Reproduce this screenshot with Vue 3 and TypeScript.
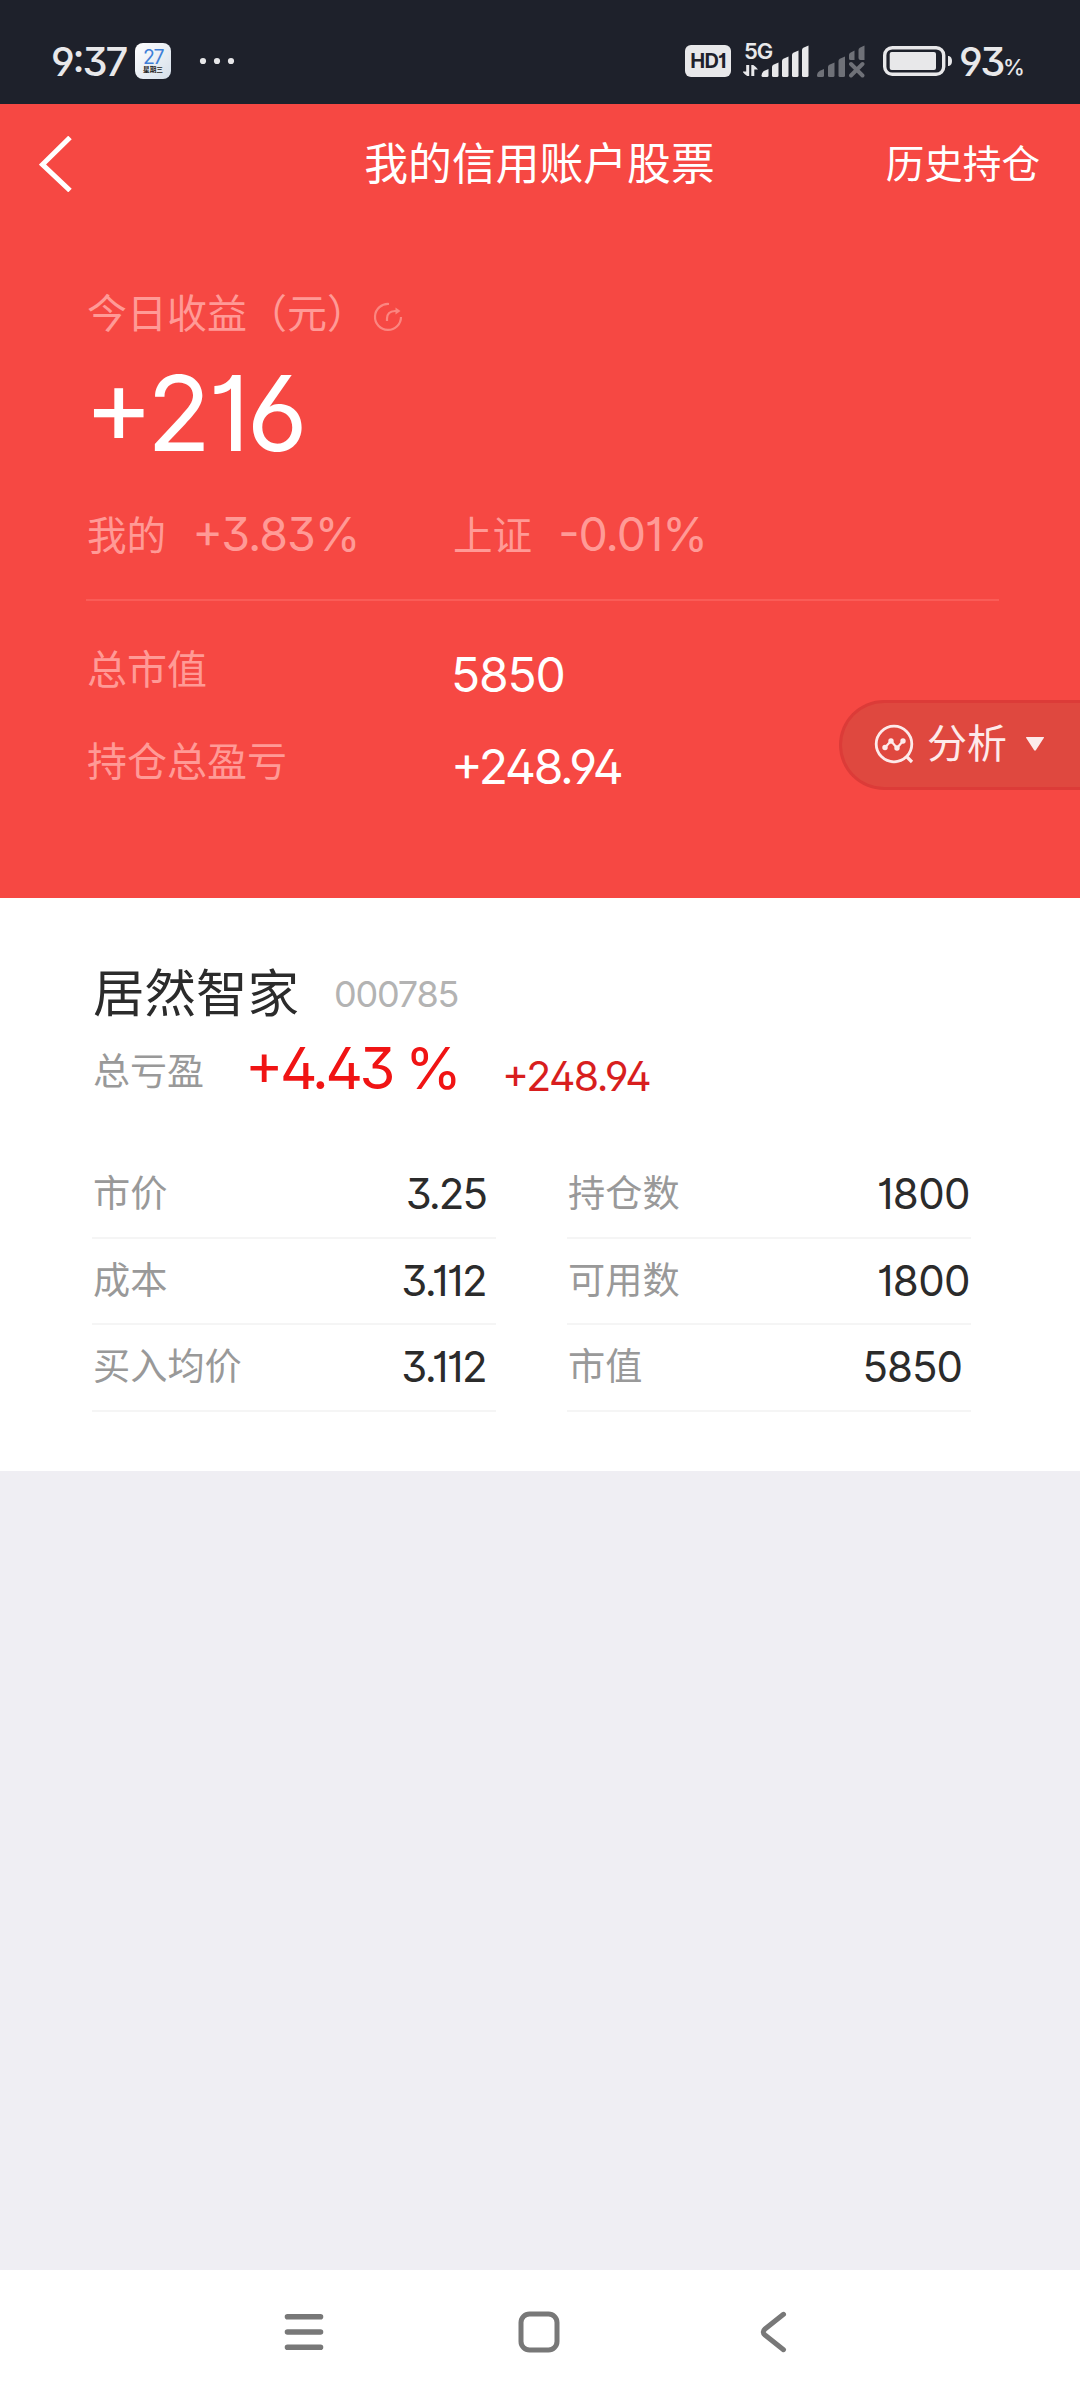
<script setup lang="ts">
interface Cell {
  label: string
  value: string
  cls: string
}

const left: Cell[] = [
  { label: '市价', value: '3.25', cls: 'v325' },
  { label: '成本', value: '3.112', cls: 'v3112' },
  { label: '买入均价', value: '3.112', cls: 'v3112' },
]
const right: Cell[] = [
  { label: '持仓数', value: '1800', cls: 'v1800' },
  { label: '可用数', value: '1800', cls: 'v1800' },
  { label: '市值', value: '5850', cls: 'v5850' },
]
const columns: Cell[][] = [left, right]
</script>

<template>
  <div class="screen">
    <div class="status">
      <span class="clock">9:37</span>
      <span class="calendar"><b>27</b><i>星期三</i></span>
      <svg class="dots" width="36" height="8" viewBox="0 0 36 8" fill="#e6e6e8">
        <circle cx="4" cy="4" r="3.1" /><circle cx="18" cy="4" r="3.1" /><circle cx="32" cy="4" r="3.1" />
      </svg>
      <span class="hd">HD1</span>
      <div class="signal">
        <span class="net">5G</span>
        <svg width="122" height="36" viewBox="743 43 122 36">
          <g fill="#e8e8ea">
            <path d="M742.500 71.500h3.700V65h3v11h-2q-3-2-4.700-4.500zM758 69.500h-3.700V76h-3V65h2q3 2 4.700 4.500z" />
            <path d="M761.500 75.500q0-3.500 3.500-5l3.500-1.500v6.500q0 1.500-1.500 1.500h-4q-1.500 0-1.500-1.500z" />
            <path d="M772 67q0-1.500 1.300-2.200l5.200-2.300V75.500q0 1.500-1.500 1.500h-3.500q-1.500 0-1.500-1.500z" />
            <path d="M782 61q0-1.500 1.300-2.200l5.200-2.300V75.500q0 1.500-1.500 1.500h-3.500q-1.500 0-1.500-1.500z" />
            <path d="M792 55q0-1.500 1.300-2.200l5.200-2.300V75.500q0 1.500-1.500 1.500h-3.500q-1.500 0-1.500-1.500z" />
            <path d="M802 50q0-1.500 1.300-2.200l5.200-2.300V75.500q0 1.500-1.500 1.500h-3.500q-1.500 0-1.500-1.500z" />
          </g>
          <g fill="#6f7178">
            <path d="M817 75.500q0-3.500 3.500-5l3.500-1.500v6.500q0 1.500-1.500 1.500h-4q-1.500 0-1.500-1.500z" />
            <path d="M828 67q0-1.500 1.300-2.200l5.200-2.300V75.500q0 1.500-1.500 1.500h-3.500q-1.500 0-1.500-1.500z" />
            <path d="M838.500 61q0-1.500 1.300-2.200l5.200-2.300V75.500q0 1.500-1.500 1.500h-3.500q-1.500 0-1.500-1.500z" />
            <path d="M849 55q0-1.500 1.300-2.200l4.200-2.300V60h-4q-1.500 0-1.500-1.500z" />
            <path d="M858.500 50q0-1.500 1.300-2.200l4.700-2.300V60h-4q-2 0-2-2z" />
          </g>
          <path d="M851 64l11.500 11.500M862.500 64l-11.500 11.500" stroke="#6f7178" stroke-width="3.900" stroke-linecap="round" />
        </svg>
      </div>
      <svg class="battery" width="70" height="30" viewBox="883 46 70 30">
        <rect x="884.700" y="47.700" width="59" height="26.600" rx="7.500" fill="none" stroke="#e8e8ea" stroke-width="3.400" />
        <rect x="889.700" y="52" width="46.300" height="18" rx="2" fill="#e8e8ea" />
        <path d="M948 56h1q3 1 3 5t-3 5h-1z" fill="#e8e8ea" />
      </svg>
      <span class="percent">93<small>%</small></span>
    </div>

    <div class="hero">
      <div class="nav">
        <svg class="back" width="34" height="56" viewBox="0 0 34 56" fill="none" stroke="#fff" stroke-width="5">
          <path d="M31 1.500L3.500 28.500 31 54.500" />
        </svg>
        <h1>我的信用账户股票</h1>
        <span class="history">历史持仓</span>
      </div>

      <div class="today">
        <span>今日收益（元）</span>
        <svg width="30" height="30" viewBox="0 0 30 30" fill="none" stroke="#fb8680" stroke-width="2.200">
          <path d="M16 2A13 13 0 1 0 28 15" />
          <path d="M14 19v-2.500q0-7 8-7.500h2" />
          <path d="M22.500 5.500v7l5-3.500z" fill="#fb8680" stroke="none" />
        </svg>
      </div>
      <div class="gain">+216</div>

      <div class="compare">
        <div class="mine"><span>我的</span><span class="pct">+3.83%</span></div>
        <div><span>上证</span><span class="pct">-0.01%</span></div>
      </div>

      <div class="sum s1"><span>总市值</span><b class="n1">5850</b></div>
      <div class="sum s2"><span>持仓总盈亏</span><b class="n2">+248.94</b></div>

      <div class="analyse">
        <svg width="40" height="40" viewBox="0 0 40 40" fill="none" stroke="#fdeaea" stroke-width="2.800">
          <circle cx="20" cy="20" r="17.800" />
          <path d="M32 32l6 6" stroke-width="3.200" />
          <path d="M11 23.500L17 17l6 7 6-7" stroke-width="2.200" />
          <g fill="#fdeaea" stroke="none">
            <circle cx="11" cy="23.500" r="2.700" /><circle cx="17" cy="17" r="2.700" />
            <circle cx="23" cy="24" r="2.700" /><circle cx="29" cy="17" r="2.700" />
          </g>
        </svg>
        <span>分析</span>
        <svg class="caret" width="20" height="16" viewBox="0 0 20 16"><path d="M1.500 1h17q1 0 .3 1L11 14q-1 1.500-2 0L1.200 2q-.5-1 .3-1z" fill="#fdeaea" /></svg>
      </div>
    </div>

    <div class="card">
      <div class="stock"><span class="name">居然智家</span><span class="code">000785</span></div>
      <div class="profit">
        <span class="plabel">总亏盈</span>
        <span class="rate">+4.43 %</span>
        <span class="amount">+248.94</span>
      </div>
      <div class="grid">
        <div v-for="(col, i) in columns" :key="i" class="col">
          <div v-for="cell in col" :key="cell.label" class="row">
            <span>{{ cell.label }}</span>
            <b :class="cell.cls">{{ cell.value }}</b>
          </div>
        </div>
      </div>
    </div>

    <div class="blank"></div>

    <div class="system">
      <svg width="42" height="46" viewBox="0 0 42 46" stroke="#787878" stroke-width="5.600" stroke-linecap="round">
        <path d="M4.500 7.700h33M4.500 23h33M4.500 38.300h33" />
      </svg>
      <svg width="46" height="46" viewBox="0 0 46 46" fill="none" stroke="#787878" stroke-width="5">
        <rect x="5" y="5" width="36" height="36" rx="8.500" />
      </svg>
      <svg width="34" height="46" viewBox="0 0 34 46" fill="none" stroke="#787878" stroke-width="5" stroke-linecap="round">
        <path d="M27.500 5.300L9 20q-3.500 3 0 6L27.500 40.700" />
      </svg>
    </div>
  </div>
</template>

<style>
body {
  margin: 0;
}
</style>

<style scoped>
.screen {
  width: 1080px;
  height: 2400px;
  display: flex;
  flex-direction: column;
  overflow: hidden;
  background: #efeef3;
  font-family: Inter, 'Noto Sans CJK SC', sans-serif;
  font-feature-settings: 'ss01', 'cv01', 'cv02', 'cv03', 'cv04', 'cv09', 'case';
  white-space: nowrap;
}
b,
i,
h1 {
  font-weight: 400;
  font-style: normal;
  margin: 0;
}
svg {
  display: block;
  flex: none;
}
.status {
  height: 104px;
  flex: none;
  box-sizing: border-box;
  padding: 18px 0 0 51px;
  background: #1e212b;
  color: #e8e8ea;
  display: flex;
  align-items: center;
}
.clock {
  width: 84px;
  font-size: 40px;
  font-weight: 500;
  letter-spacing: -2.2px;
}
.calendar {
  width: 36px;
  height: 36px;
  border-radius: 8px;
  background: linear-gradient(135deg, #fff, #d5dfea);
  display: flex;
  flex-direction: column;
  align-items: center;
}
.calendar b {
  font-size: 19.5px;
  line-height: 18px;
  margin-top: 5px;
  letter-spacing: -1.5px;
  color: #3f7fd8;
}
.calendar i {
  font-size: 6.7px;
  line-height: 8px;
  font-weight: 700;
  color: #222;
}
.dots {
  margin-left: 28px;
}
.hd {
  width: 46px;
  height: 32px;
  border-radius: 6px;
  margin-left: 450px;
  background: #e8e8ea;
  color: #1e212b;
  font-size: 20px;
  line-height: 33px;
  font-weight: 700;
  text-align: center;
  letter-spacing: -0.8px;
}
.signal {
  position: relative;
  margin-left: 12px;
}
.net {
  position: absolute;
  left: 1px;
  top: -2px;
  font-size: 22px;
  line-height: 20px;
  font-weight: 600;
  letter-spacing: -1px;
}
.battery {
  margin-left: 18px;
}
.percent {
  margin-left: 6px;
  font-size: 40px;
  font-weight: 500;
  letter-spacing: -2.5px;
}
.percent small {
  font-size: 22px;
  position: relative;
  top: -1px;
}
.hero {
  position: relative;
  height: 794px;
  flex: none;
  background: #f64843;
  color: #fff;
}
.nav {
  height: 120px;
  padding: 0 40px 0 39px;
  display: grid;
  grid-template-columns: 1fr auto 1fr;
  align-items: center;
}
h1 {
  font-size: 43.8px;
  line-height: 62px;
  padding-top: 1px;
}
.history {
  justify-self: end;
  font-size: 38.6px;
  line-height: 60px;
}
.today {
  height: 60px;
  margin: 60px 0 0 87px;
  font-size: 40px;
  line-height: 60px;
  color: #ff9a96;
  display: flex;
}
.today svg {
  margin: 18px 0 0 6px;
}
.gain {
  height: 100px;
  margin-left: 84px;
  margin-top: 19px;
  font-size: 105px;
  line-height: 100px;
  letter-spacing: -3px;
}
.compare {
  height: 133px;
  margin: 5px 81px 0 86px;
  box-sizing: border-box;
  border-bottom: 2px solid #fa5c57;
  color: #ff9a96;
  font-size: 39.6px;
  line-height: 60px;
  padding: 38px 0 0 1px;
  display: flex;
}
.compare > div {
  display: flex;
}
.mine {
  width: 366px;
}
.pct {
  font-size: 46.5px;
  line-height: 57px;
  margin-left: 26px;
  letter-spacing: -1.1px;
}
.sum {
  margin-left: 87px;
  height: 60px;
  display: flex;
  font-size: 40px;
  line-height: 60px;
  color: #ff9a96;
}
.s1 {
  margin-top: 39px;
}
.s2 {
  margin-top: 32px;
}
.sum span {
  width: 364px;
}
.sum b {
  color: #fff;
  font-size: 48px;
  padding-top: 5px;
}
.n1 {
  letter-spacing: -1.2px;
}
.n2 {
  letter-spacing: -2.3px;
}
.analyse {
  position: absolute;
  right: 0;
  top: 596px;
  width: 241px;
  height: 90px;
  box-sizing: border-box;
  border: 3px solid #dc3b38;
  border-right: 0;
  border-radius: 45px 0 0 45px;
  background: #df483f;
  color: #fdeaea;
  display: flex;
  align-items: center;
  padding: 0 0 2px 32px;
  font-size: 40px;
  line-height: 60px;
}
.analyse span {
  margin-left: 13px;
}
.caret {
  margin-left: 18px;
}
.card {
  height: 573px;
  flex: none;
  box-sizing: border-box;
  padding: 60px 0 0 92px;
  background: #fff;
}
.stock {
  display: flex;
  height: 70px;
  line-height: 70px;
}
.name {
  font-size: 51.5px;
  color: #2b2b2b;
  width: 241px;
  padding-left: 1px;
}
.code {
  font-size: 36px;
  line-height: 72px;
  color: #b3b3b3;
  letter-spacing: -1.2px;
}
.profit {
  height: 110px;
  display: flex;
  line-height: 80px;
}
.plabel {
  font-size: 37px;
  color: #999;
  width: 152px;
  padding: 4px 0 0 1px;
}
.rate {
  font-size: 58px;
  color: #f01414;
  width: 257px;
  letter-spacing: -3.4px;
}
.amount {
  font-size: 41px;
  color: #d81e1e;
  padding-top: 8px;
  letter-spacing: -1.6px;
}
.grid {
  display: flex;
  gap: 71px;
  margin-top: 14px;
}
.col {
  width: 404px;
}
.row {
  height: 86.5px;
  box-sizing: border-box;
  border-bottom: 2px solid #f5f5f5;
  display: flex;
  justify-content: space-between;
  font-size: 37.2px;
  line-height: 84px;
  padding-left: 1px;
  color: #999;
}
.row b {
  font-size: 42px;
  line-height: 83px;
  color: #2b2b2b;
}
.v325 {
  padding-right: 10px;
  letter-spacing: -2px;
}
.v3112 {
  padding-right: 10px;
  letter-spacing: -1.6px;
}
.v1800 {
  padding-right: 1px;
  letter-spacing: -0.6px;
}
.v5850 {
  padding-right: 9px;
  letter-spacing: -1px;
}
.blank {
  height: 799px;
  flex: none;
}
.system {
  height: 130px;
  flex: none;
  background: #fff;
  display: flex;
  padding: 39px 0 0 283px;
  box-sizing: border-box;
}
.system svg:nth-child(2) {
  margin-left: 191px;
}
.system svg:nth-child(3) {
  margin-left: 194px;
}
</style>
